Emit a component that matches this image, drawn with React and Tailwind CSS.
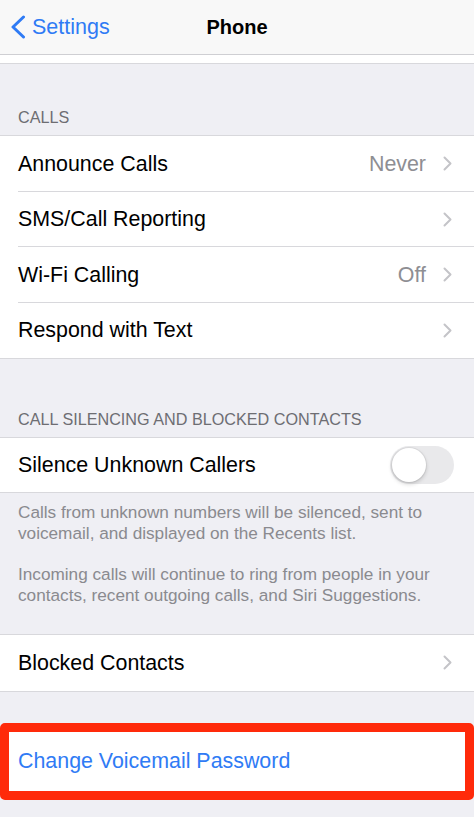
import React from 'react';

const font = { fontFamily: '"Liberation Sans", Arial, sans-serif' };

const Chevron = () => (
    <svg width="9" height="15" viewBox="0 0 9 15" fill="none" className="shrink-0">
        <path d="M1.5 1.5 L7.5 7.5 L1.5 13.5" stroke="#c4c4c8" strokeWidth="2" strokeLinecap="round" strokeLinejoin="round" />
    </svg>
);

const Row = ({ label, value, last }) => (
    <div className="relative flex items-center h-[55.5px] pl-[18px] pr-[22px] bg-white">
        <span className="flex-1 text-[21.4px] text-black">{label}</span>
        {value && <span className="text-[21.4px] text-[#8e8e93] mr-[17px]">{value}</span>}
        <Chevron />
        {!last && <div className="absolute left-[18px] right-0 bottom-0 h-px bg-[#d8d8dc]"></div>}
    </div>
);

const SectionHeader = ({ children, className = '' }) => (
    <div className={`px-[18px] text-[16.2px] leading-[18px] text-[#6d6d72] uppercase ${className}`}>
        {children}
    </div>
);

const App = () => {
    return (
        <div className="min-h-screen w-[474px] bg-[#efeff4] overflow-hidden" style={font}>
            {/* Nav bar */}
            <header className="relative h-[55px] flex items-center bg-[#f8f8f8] border-b border-[#cfcfd3]">
                <div className="flex items-center pl-[10px] gap-[6px]">
                    <svg width="16" height="24" viewBox="0 0 16 24" fill="none">
                        <path d="M13.5 2 L3 12 L13.5 22" stroke="#2f7bf5" strokeWidth="3" strokeLinecap="round" strokeLinejoin="round" />
                    </svg>
                    <span className="text-[21.5px] text-[#2f7bf5]">Settings</span>
                </div>
                <h1 className="absolute left-0 right-0 text-center text-[20px] font-bold text-black pointer-events-none">Phone</h1>
            </header>

            {/* Edge of the row scrolled under the bar */}
            <div className="h-[9px] bg-white border-b border-[#d8d8dc]"></div>

            <SectionHeader className="pt-[44px] pb-[9px]">Calls</SectionHeader>
            <div className="border-y border-[#d8d8dc]">
                <Row label="Announce Calls" value="Never" />
                <Row label="SMS/Call Reporting" />
                <Row label="Wi-Fi Calling" value="Off" />
                <Row label="Respond with Text" last />
            </div>

            <SectionHeader className="pt-[51px] pb-[9px]">Call Silencing and Blocked Contacts</SectionHeader>
            <div className="border-y border-[#d8d8dc] bg-white flex items-center h-[56px] pl-[18px] pr-[20px]">
                <span className="flex-1 text-[21.4px] text-black">Silence Unknown Callers</span>
                <div className="w-[64px] h-[38px] rounded-full bg-[#e9e9eb] p-[2px]">
                    <div className="w-[34px] h-[34px] rounded-full bg-white shadow-[0_2px_4px_rgba(0,0,0,0.18),0_0_0_1px_rgba(0,0,0,0.05)]"></div>
                </div>
            </div>
            <div className="px-[18px] pt-[9px] pb-[28px] text-[17.2px] leading-[21px] text-[#8a8a8f]">
                <p>Calls from unknown numbers will be silenced, sent to voicemail, and displayed on the Recents list.</p>
                <p className="mt-[20px]">Incoming calls will continue to ring from people in your contacts, recent outgoing calls, and Siri Suggestions.</p>
            </div>

            <div className="border-y border-[#d8d8dc]">
                <Row label="Blocked Contacts" last />
            </div>

            {/* Highlighted voicemail row */}
            <div className="mt-[31px] h-[77px] flex items-center bg-white border-[9px] border-[#ff2a0a] rounded-[5px] pl-[9px]">
                <span className="text-[21.4px] text-[#2f7bf5]">Change Voicemail Password</span>
            </div>
        </div>
    );
};

export default App;
